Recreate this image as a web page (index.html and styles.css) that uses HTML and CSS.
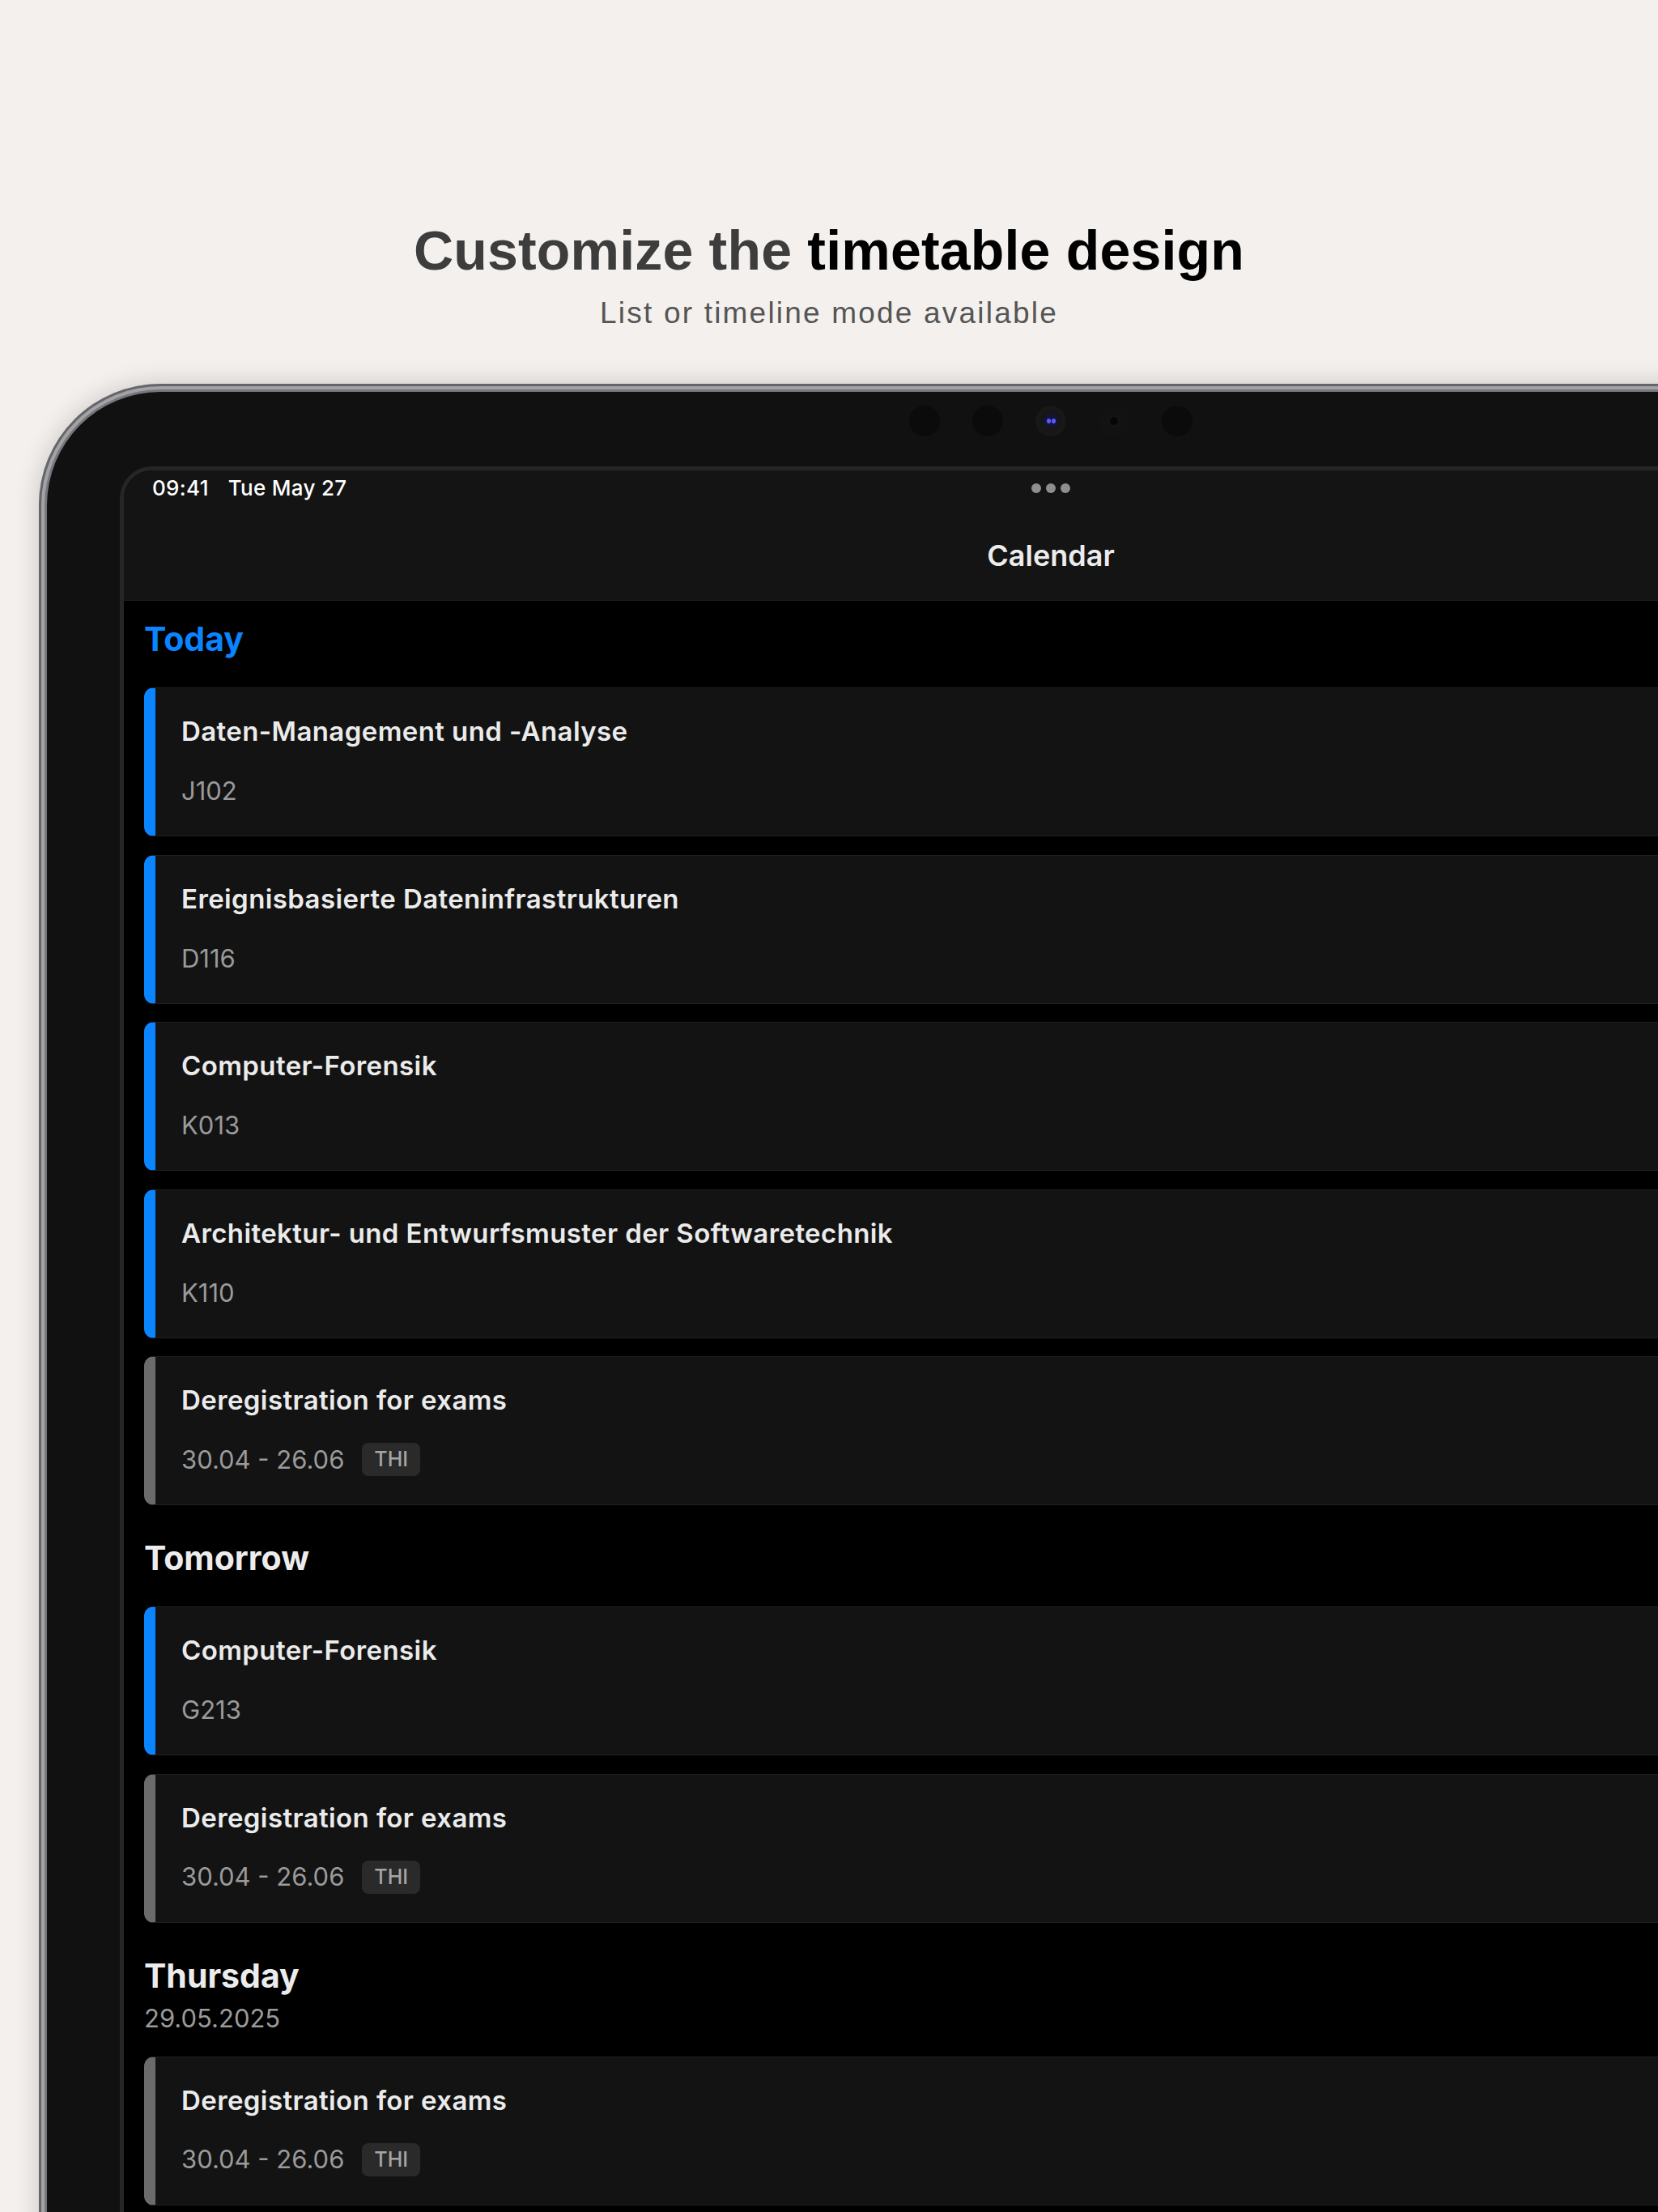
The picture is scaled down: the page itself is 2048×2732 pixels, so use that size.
FILE: index.html
```html
<!DOCTYPE html>
<html lang="en">
<head>
    <meta charset="UTF-8">
    <meta name="viewport" content="width=device-width, initial-scale=1.0">
    <title>Customize the timetable design</title>
    <link rel="stylesheet" href="styles.css">
</head>
<body>
    <header class="hero">
        <h1>Customize the <strong>timetable design</strong></h1>
        <p>List or timeline mode available</p>
    </header>

    <div class="device">
        <div class="bezel">
            <div class="cams">
                <span class="cam"></span>
                <span class="cam"></span>
                <span class="cam lens"><i></i><i></i></span>
                <span class="cam sensor"></span>
                <span class="cam"></span>
            </div>

            <div class="screen">
                <div class="top">
                    <div class="status">
                        <div><span class="time">09:41</span><span>Tue May 27</span></div>
                        <div class="dots"><i></i><i></i><i></i></div>
                        <div></div>
                    </div>
                    <div class="title">Calendar</div>
                </div>

                <div class="list">
                    <section class="day">
                        <div class="head">
                            <h2 class="today">Today</h2>
                        </div>
                        <div class="cards">
                            <div class="card">
                                <div class="name">Daten-Management und -Analyse</div>
                                <div class="meta">J102</div>
                            </div>
                            <div class="card">
                                <div class="name">Ereignisbasierte Dateninfrastrukturen</div>
                                <div class="meta">D116</div>
                            </div>
                            <div class="card">
                                <div class="name">Computer-Forensik</div>
                                <div class="meta">K013</div>
                            </div>
                            <div class="card">
                                <div class="name">Architektur- und Entwurfsmuster der Softwaretechnik</div>
                                <div class="meta">K110</div>
                            </div>
                            <div class="card event">
                                <div class="name">Deregistration for exams</div>
                                <div class="meta">30.04 - 26.06 <span class="tag">THI</span></div>
                            </div>
                        </div>
                    </section>

                    <section class="day">
                        <div class="head">
                            <h2>Tomorrow</h2>
                        </div>
                        <div class="cards">
                            <div class="card">
                                <div class="name">Computer-Forensik</div>
                                <div class="meta">G213</div>
                            </div>
                            <div class="card event">
                                <div class="name">Deregistration for exams</div>
                                <div class="meta">30.04 - 26.06 <span class="tag">THI</span></div>
                            </div>
                        </div>
                    </section>

                    <section class="day">
                        <div class="head dated">
                            <h2>Thursday</h2>
                            <div class="date">29.05.2025</div>
                        </div>
                        <div class="cards">
                            <div class="card event">
                                <div class="name">Deregistration for exams</div>
                                <div class="meta">30.04 - 26.06 <span class="tag">THI</span></div>
                            </div>
                        </div>
                    </section>
                </div>
            </div>
        </div>
    </div>
</body>
</html>
```

FILE: styles.css
```css
html, body {
    overflow: hidden;
}
body {
    margin: 0;
    height: 2732px;
    background-color: #f4f0ed;
    font-family: "Liberation Sans", Arial, sans-serif;
}

/* Headline */
.hero {
    padding-top: 269px;
    text-align: center;
}
.hero h1 {
    margin: 0;
    font-size: 68px;
    line-height: 80px;
    font-weight: 700;
    letter-spacing: 0.2px;
    color: #3d3d3d;
}
.hero h1 strong {
    color: #000;
}
.hero p {
    margin: 16px 0 0;
    font-size: 37px;
    line-height: 44px;
    letter-spacing: 2.2px;
    color: #555;
}

/* Device frame */
.device {
    margin: 65px 0 0 48px;
    width: 2500px;
    padding: 10px;
    box-sizing: border-box;
    background-color: #a3a3a7;
    border-radius: 150px;
    box-shadow: inset 0 0 0 3px #66666a, 0 0 30px rgba(0, 0, 0, 0.18);
}
.bezel {
    background-color: #111;
    border-radius: 140px;
    padding: 17px 90px 0;
    box-shadow: 0 0 0 3px #78787c;
}
.cams {
    display: flex;
    justify-content: center;
    gap: 40px;
    height: 38px;
    margin-bottom: 37px;
}
.cam {
    width: 38px;
    height: 38px;
    border-radius: 50%;
    background-color: #0b0b0b;
}
.cam.lens {
    display: flex;
    justify-content: center;
    align-items: center;
    gap: 1px;
    background: radial-gradient(circle, #14143a 0 7px, #151515 10px, #191919 18px, #131313 19px);
}
.cam.lens i {
    width: 5px;
    height: 6px;
    border-radius: 50%;
    background-color: #5a5aff;
}
.cam.sensor {
    background: radial-gradient(circle, #050505 0 4px, #161616 6px, #121212 8px);
}

/* Screen */
.screen {
    border: 5px solid #262626;
    border-radius: 40px;
    background-color: #000;
    min-height: 2300px;
    overflow: hidden;
}
.top {
    background-color: #141414;
    border-bottom: 1px solid #1f1f1f;
    padding: 7px 35px 33px;
    font-family: Inter, "Noto Sans", sans-serif;
}
.status {
    display: grid;
    grid-template-columns: 1fr auto 1fr;
    align-items: center;
    height: 30px;
    font-size: 26px;
    line-height: 30px;
    font-weight: 500;
    letter-spacing: 0.3px;
    color: #fff;
}
.status .time {
    margin-right: 24px;
}
.dots {
    display: flex;
    gap: 6px;
}
.dots i {
    width: 12px;
    height: 12px;
    border-radius: 50%;
    background-color: #8e8e8e;
}
.title {
    margin-top: 46px;
    text-align: center;
    font-size: 36px;
    line-height: 44px;
    font-weight: 600;
    color: #ececec;
}

/* List */
.list {
    padding: 22px 25px 0;
    font-family: Inter, "Noto Sans", sans-serif;
}
.day + .day {
    margin-top: 40px;
}
.head {
    margin-bottom: 35px;
}
.head.dated {
    margin-bottom: 27px;
}
.head h2 {
    margin: 0;
    font-size: 41px;
    line-height: 50px;
    font-weight: 700;
    color: #ececec;
}
.head h2.today {
    color: #0a84ff;
}
.date {
    margin-top: 8px;
    font-size: 31px;
    line-height: 40px;
    color: #9a9a9a;
}
.cards {
    display: flex;
    flex-direction: column;
    gap: 22.5px;
}
.card {
    height: 184px;
    box-sizing: border-box;
    display: flex;
    flex-direction: column;
    justify-content: space-between;
    padding: 33px 32px 35px;
    background-color: #131313;
    border: 1px solid #202020;
    border-left: 14px solid #0a84ff;
    border-radius: 12px;
}
.card.event {
    border-left-color: #6b6b6b;
}
.name {
    font-size: 33px;
    line-height: 40px;
    font-weight: 600;
    letter-spacing: 0.4px;
    color: #ebebeb;
}
.meta {
    display: flex;
    align-items: center;
    gap: 22px;
    font-size: 31px;
    line-height: 40px;
    color: #9a9a9a;
}
.tag {
    height: 41px;
    padding: 0 15px;
    border-radius: 8px;
    background-color: #2a2a2a;
    font-size: 25px;
    line-height: 41px;
    font-weight: 500;
    color: #a5a5a5;
}
```
